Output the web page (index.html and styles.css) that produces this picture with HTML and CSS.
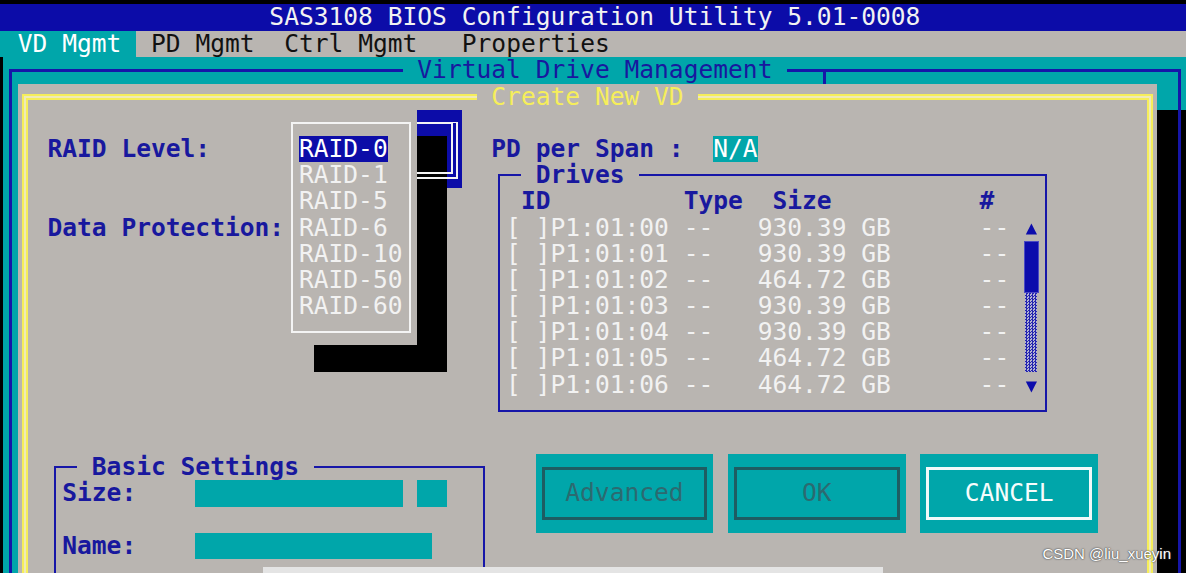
FILE: index.html
```html
<!DOCTYPE html>
<html>
<head>
<meta charset="utf-8">
<link rel="stylesheet" href="styles.css">
</head>
<body>
<div class="screen">
  <div class="titlebar">SAS3108 BIOS Configuration Utility 5.01-0008</div>
  <div class="menubar"><span class="tab on"> VD Mgmt </span><span class="tab"> PD Mgmt </span><span class="tab"> Ctrl Mgmt </span><span class="tab">  Properties</span></div>
  <div class="teal"></div>
  <div class="dialog"></div>
  <div class="dshadow"></div>
  <div class="outer-frame"></div>
  <div class="outer-title"> Virtual Drive Management </div>
  <div class="tick"></div>
  <div class="yframe"></div>
  <div class="ytitle"> Create New VD </div>

  <div class="lbl lbl-raid">RAID Level:</div>
  <div class="lbl lbl-dp">Data Protection:</div>
  <div class="lbl lbl-pd">PD per Span :</div>
  <div class="na">N/A</div>

  <div class="drives-frame"></div>
  <div class="lbl drives-title"> Drives </div>
  <div class="lbl drives-head">ID         Type  Size          #</div>
  <div class="drives-list">
    <div class="drive">[ ]P1:01:00 --   930.39 GB      --</div>
    <div class="drive">[ ]P1:01:01 --   930.39 GB      --</div>
    <div class="drive">[ ]P1:01:02 --   464.72 GB      --</div>
    <div class="drive">[ ]P1:01:03 --   930.39 GB      --</div>
    <div class="drive">[ ]P1:01:04 --   930.39 GB      --</div>
    <div class="drive">[ ]P1:01:05 --   464.72 GB      --</div>
    <div class="drive">[ ]P1:01:06 --   464.72 GB      --</div>
  </div>
  <div class="scroll">
    <svg class="arrow" viewBox="0 0 14.8 26.2" width="14.8" height="26.2"><polygon points="7.4,8.5 13,19.5 1.8,19.5" fill="#0c0cac"/></svg>
    <div class="thumb"></div>
    <div class="track"></div>
    <svg class="arrow" viewBox="0 0 14.8 26.2" width="14.8" height="26.2"><polygon points="1.8,9.5 13,9.5 7.4,20.5" fill="#0c0cac"/></svg>
  </div>

  <div class="combo-bg"></div>
  <div class="pshadow-r"></div>
  <div class="pshadow-b"></div>
  <div class="combo-frame"></div>
  <div class="popup">
    <div class="popup-box">
      <div class="opt sel">RAID-0</div>
      <div class="opt">RAID-1</div>
      <div class="opt">RAID-5</div>
      <div class="opt">RAID-6</div>
      <div class="opt">RAID-10</div>
      <div class="opt">RAID-50</div>
      <div class="opt">RAID-60</div>
    </div>
  </div>

  <div class="basic-frame"></div>
  <div class="lbl basic-title"> Basic Settings </div>
  <div class="lbl lbl-size">Size:</div>
  <div class="field f-size"></div>
  <div class="field f-unit"></div>
  <div class="lbl lbl-name">Name:</div>
  <div class="field f-name"></div>

  <div class="btn b-adv"><span class="btn-in">Advanced</span></div>
  <div class="btn b-ok"><span class="btn-in">OK</span></div>
  <div class="btn b-cancel"><span class="btn-in">CANCEL</span></div>
</div>
<div class="strip"></div>
<div class="watermark">CSDN @liu_xueyin</div>
</body>
</html>
```

FILE: styles.css
```css
:root {
  --w: 14.8px;
  --h: 26.2px;
  --grey: #b9b5b1;
  --teal: #00a6aa;
  --blue: #0c0ca8;
  --line: #1616a8;
  --ink: #18189e;
  --white: #f3f3f3;
  --yel: #f6ee5a;
}

* { box-sizing: border-box; margin: 0; padding: 0; }

html, body { background: #000; overflow: hidden; }

body {
  width: 1186px;
  height: 573px;
  position: relative;
  font-family: "DejaVu Sans Mono", "Liberation Mono", monospace;
  font-size: 24.58px;
  line-height: 26.2px;
  color: var(--white);
}

.screen {
  display: grid;
  grid-template-columns: repeat(80, var(--w));
  grid-template-rows: repeat(16, var(--h)) 30.2px repeat(5, var(--h));
  padding: 5px 0 0 3px;
}

.titlebar {
  grid-column: 1 / 81;
  grid-row: 1;
  margin: -1px 0 0 -3px;
  padding-left: 3px;
  background: var(--blue);
  color: #f2f2f2;
  text-align: center;
  white-space: pre;
}

.menubar {
  grid-column: 1 / 81;
  grid-row: 2;
  margin-left: -3px;
  padding-left: 3px;
  background: var(--grey);
  color: #111;
  display: flex;
}
.tab { white-space: pre; }
.tab.on { background: var(--teal); color: #fff; margin-left: -3px; padding-left: 3px; }

.teal { grid-column: 1 / 81; grid-row: 3 / 23; background: var(--teal); }
.dialog { grid-column: 2 / 79; grid-row: 4 / 23; background: var(--grey); }
.dshadow { grid-column: 79 / 81; grid-row: 5 / 23; background: #000; }

.outer-frame {
  grid-column: 1 / 81;
  grid-row: 3 / 23;
  margin: 11.6px 5.9px 0;
  border: 3px solid var(--line);
  border-bottom: 0;
}
.outer-title {
  grid-column: 28 / 54;
  grid-row: 3;
  background: var(--teal);
  color: var(--ink);
  white-space: pre;
}
.tick {
  grid-column: 56;
  grid-row: 3;
  margin: 11.6px 0 0 5.9px;
  border-left: 3px solid var(--line);
}

.yframe {
  grid-column: 2 / 79;
  grid-row: 4 / 23;
  margin: 10.1px 4.4px 0;
  border: 2px solid var(--yel);
  border-bottom: 0;
  box-shadow: inset 0 0 0 2px #efeab8, inset 0 0 0 4px var(--yel);
}
.ytitle {
  grid-column: 33 / 48;
  grid-row: 4;
  background: var(--grey);
  color: var(--yel);
  white-space: pre;
}

.lbl { color: var(--ink); font-weight: bold; white-space: pre; }
.lbl-raid { grid-column: 4 / 15; grid-row: 6; }
.lbl-dp { grid-column: 4 / 20; grid-row: 9; }
.lbl-pd { grid-column: 34 / 47; grid-row: 6; }
.na { grid-column: 49 / 52; grid-row: 6; background: var(--teal); color: #fff; }

.drives-frame {
  grid-column: 34 / 72;
  grid-row: 7 / 17;
  margin: 12.1px 6.4px;
  border: 2px solid var(--line);
}
.drives-title { grid-column: 36 / 44; grid-row: 7; background: var(--grey); }
.drives-head { grid-column: 36 / 68; grid-row: 8; }
.drives-list { grid-column: 35 / 69; grid-row: 9 / 16; }
.drive { white-space: pre; height: var(--h); color: #f2f2f2; }

.scroll { grid-column: 70; grid-row: 9 / 16; display: flex; flex-direction: column; }
.arrow { display: block; height: var(--h); flex: none; }
.thumb { height: 52.4px; background: #0c0cac; border: 1px solid #4a4ac4; flex: none; }
.track {
  height: 78.6px;
  margin: 0 2px 0 1px;
  flex: none;
  background: repeating-conic-gradient(#2424b0 0 25%, #b4b4d2 0 50%) 0 0 / 3px 3px;
}

.combo-bg { grid-column: 20 / 32; grid-row: 5 / 8; background: var(--blue); }
.pshadow-r { grid-column: 29 / 31; grid-row: 6 / 15; background: #000; }
.pshadow-b { grid-column: 22 / 29; grid-row: 14; background: #000; }
.combo-frame {
  grid-column: 20 / 32;
  grid-row: 5 / 8;
  margin: 12.1px 3.9px 9.6px 0;
  border-top: 2px solid #f4f4f4;
  border-right: 7px double #f4f4f4;
  border-bottom: 7px double #f4f4f4;
}
.popup {
  grid-column: 20 / 29;
  grid-row: 5 / 14;
  background: var(--grey);
  padding: 12.1px 6.4px;
}
.popup-box {
  height: 100%;
  border: 2px solid #f4f4f4;
  padding: 12.1px 6.4px;
}
.opt { white-space: pre; height: var(--h); color: #f2f2f2; }
.opt.sel { background: var(--blue); width: calc(6 * var(--w)); color: #fff; }

.basic-frame {
  grid-column: 4 / 34;
  grid-row: 18 / 23;
  margin: 12.1px 6.4px 0;
  border: 2px solid var(--line);
  border-bottom: 0;
}
.basic-title { grid-column: 6 / 22; grid-row: 18; background: var(--grey); }
.lbl-size { grid-column: 5 / 10; grid-row: 19; }
.lbl-name { grid-column: 5 / 10; grid-row: 21; }
.field { background: var(--teal); }
.f-size { grid-column: 14 / 28; grid-row: 19; }
.f-unit { grid-column: 29 / 31; grid-row: 19; }
.f-name { grid-column: 14 / 30; grid-row: 21; }

.btn {
  grid-row: 18 / 21;
  background: var(--teal);
  padding: 13px 6px;
  display: flex;
}
.btn-in {
  flex: 1;
  display: flex;
  align-items: center;
  justify-content: center;
  border: 3px solid #1e5c62;
  color: #2c6a70;
  white-space: pre;
}
.b-adv { grid-column: 37 / 49; }
.b-ok { grid-column: 50 / 62; }
.b-cancel { grid-column: 63 / 75; }
.b-cancel .btn-in { border-color: #f2fafa; color: #f6fcfc; }

.strip {
  position: absolute;
  left: 263px;
  top: 567px;
  width: 620px;
  height: 6px;
  background: #e4e4e4;
}

.watermark {
  position: absolute;
  right: 15px;
  top: 545px;
  font: 15px/18px "Liberation Sans", Arial, sans-serif;
  color: #fff;
  text-shadow: 0 0 2px #444, 0 0 1px #444;
}
```
